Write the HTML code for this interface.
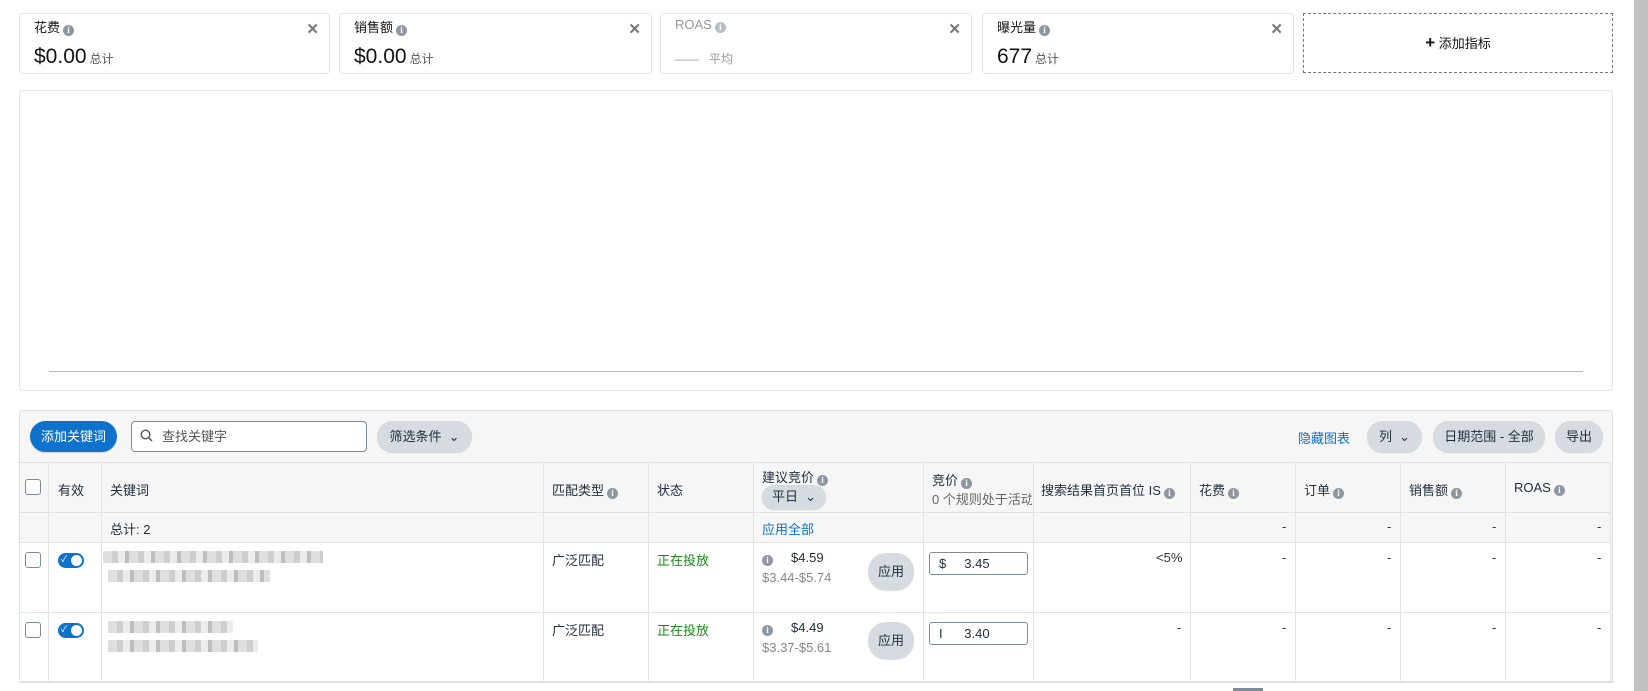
<!DOCTYPE html>
<html><head><meta charset="utf-8"><style>
*{box-sizing:border-box;margin:0;padding:0}
body{width:1648px;height:691px;background:#fff;font-family:"Liberation Sans","Noto Sans CJK SC",sans-serif;color:#232f3e;font-size:13px;position:relative;overflow:hidden}
.a{position:absolute}
.card{position:absolute;top:13px;height:61px;border:1px solid #e3e3e3;border-radius:4px;background:#fff}
.card .t{position:absolute;left:14px;top:3px;font-size:13px;color:#111}
.card .v{position:absolute;left:14px;top:31px;font-size:21px;color:#111}
.card .v small{font-size:12px;color:#555;margin-left:3px}
.card .x{position:absolute;right:10px;top:6px;font-size:15px;color:#777;font-weight:bold}
.i{display:inline-block;width:11px;height:11px;border-radius:50%;background:#8d96a3;color:#fff;font-size:9px;line-height:11px;text-align:center;font-weight:bold;vertical-align:-1px;margin-left:3px;font-family:"Liberation Serif",serif}
.btn{position:absolute;height:31px;border-radius:16px;background:#d5dbe1;color:#232f3e;font-size:13px;line-height:31px;text-align:center;box-shadow:0 1px 1px rgba(0,0,0,.15)}
.hl{position:absolute;height:1px;background:#e3e3e3}
.vl{position:absolute;width:1px;background:#e3e3e3}
.cb{position:absolute;width:16px;height:16px;border:1px solid #7f8b99;border-radius:3px;background:#fff}
.tg{position:absolute;width:26px;height:15px;border-radius:8px;background:#0e72cc}
.tg:after{content:"";position:absolute;right:2px;top:2px;width:11px;height:11px;border-radius:50%;background:#fff}
.tg:before{content:"✓";position:absolute;left:3px;top:-1px;color:#fff;font-size:9px}
.blur{position:absolute;height:12px;background:repeating-linear-gradient(90deg,#d4d4d4 0 9px,#bdbdbd 9px 15px,#e6e6e6 15px 22px,#a9a9a9 22px 26px);opacity:.75}
.dash{position:absolute;color:#333}
</style></head><body>
<div class="card" style="left:19px;width:311px"><div class="t">花费<span class="i">i</span></div><div class="x">✕</div><div class="v">$0.00<small>总计</small></div></div>
<div class="card" style="left:339px;width:313px"><div class="t">销售额<span class="i">i</span></div><div class="x">✕</div><div class="v">$0.00<small>总计</small></div></div>
<div class="card" style="left:660px;width:312px"><div class="t" style="color:#999">ROAS<span class="i" style="background:#b8bec6">i</span></div><div class="x">✕</div><div class="v" style="color:#999;font-size:12px;top:36px">—— &nbsp; 平均</div></div>
<div class="card" style="left:982px;width:312px"><div class="t">曝光量<span class="i">i</span></div><div class="x">✕</div><div class="v">677<small>总计</small></div></div>
<div class="a" style="left:1303px;top:13px;width:310px;height:60px;border:1px dashed #777;text-align:center;line-height:58px;font-size:13px;color:#111"><b style="font-size:17px">+</b> 添加指标</div>

<div class="a" style="left:19px;top:90px;width:1594px;height:301px;border:1px solid #e6e6e6;border-radius:4px"></div>
<div class="hl" style="left:49px;top:371px;width:1534px;background:#bbb"></div>

<div class="a" style="left:19px;top:410px;width:1594px;height:273px;border:1px solid #e0e0e0;border-radius:3px;background:#f6f6f6"></div>
<div class="a" style="left:20px;top:542px;width:1590px;height:139px;background:#fff"></div>
<div class="btn" style="left:30px;top:421px;width:87px;background:#0e72cc;color:#fff">添加关键词</div>
<div class="a" style="left:131px;top:421px;width:236px;height:31px;border:1px solid #7f8b99;border-radius:4px;background:#fff;line-height:29px;padding-left:30px;color:#555">查找关键字</div>
<svg class="a" style="left:140px;top:429px" width="14" height="14"><circle cx="5.5" cy="5.5" r="4.3" fill="none" stroke="#555" stroke-width="1.4"/><path d="M8.5 8.5L12 12" stroke="#555" stroke-width="1.5"/></svg>
<div class="btn" style="left:377px;top:421px;width:95px">筛选条件 &nbsp;⌄</div>
<div class="a" style="left:1298px;top:428px;color:#0e72cc">隐藏图表</div>
<div class="btn" style="left:1367px;top:421px;width:55px">列 &nbsp;⌄</div>
<div class="btn" style="left:1433px;top:421px;width:112px">日期范围 - 全部</div>
<div class="btn" style="left:1555px;top:421px;width:48px">导出</div>

<div class="hl" style="left:20px;top:462px;width:1590px"></div>
<div class="hl" style="left:20px;top:512px;width:1590px"></div>
<div class="hl" style="left:20px;top:542px;width:1590px"></div>
<div class="hl" style="left:20px;top:612px;width:1590px"></div>
<div class="hl" style="left:20px;top:681px;width:1594px;height:2px;background:#e0e0e0"></div>
<div class="vl" style="left:48px;top:462px;height:220px"></div>
<div class="vl" style="left:101px;top:462px;height:220px"></div>
<div class="vl" style="left:543px;top:462px;height:220px"></div>
<div class="vl" style="left:648px;top:462px;height:220px"></div>
<div class="vl" style="left:753px;top:462px;height:220px"></div>
<div class="vl" style="left:923px;top:462px;height:220px"></div>
<div class="vl" style="left:1033px;top:462px;height:220px"></div>
<div class="vl" style="left:1190px;top:462px;height:220px"></div>
<div class="vl" style="left:1295px;top:462px;height:220px"></div>
<div class="vl" style="left:1400px;top:462px;height:220px"></div>
<div class="vl" style="left:1505px;top:462px;height:220px"></div>
<div class="vl" style="left:1610px;top:462px;height:220px"></div>

<div class="cb" style="left:25px;top:479px"></div>
<div class="a" style="left:58px;top:480px">有效</div>
<div class="a" style="left:110px;top:480px">关键词</div>
<div class="a" style="left:552px;top:480px">匹配类型<span class="i">i</span></div>
<div class="a" style="left:657px;top:480px">状态</div>
<div class="a" style="left:762px;top:467px">建议竞价<span class="i">i</span></div>
<div class="btn" style="left:762px;top:485px;width:64px;height:24px;line-height:24px;border-radius:12px">平日 &nbsp;⌄</div>
<div class="a" style="left:932px;top:470px">竞价<span class="i">i</span></div>
<div class="a" style="left:932px;top:489px;color:#666;width:100px;white-space:nowrap;overflow:hidden">0 个规则处于活动状态</div>
<div class="a" style="left:1041px;top:480px">搜索结果首页首位 IS<span class="i">i</span></div>
<div class="a" style="left:1199px;top:480px">花费<span class="i">i</span></div>
<div class="a" style="left:1304px;top:480px">订单<span class="i">i</span></div>
<div class="a" style="left:1409px;top:480px">销售额<span class="i">i</span></div>
<div class="a" style="left:1514px;top:480px">ROAS<span class="i">i</span></div>

<div class="a" style="left:110px;top:519px">总计: 2</div>
<div class="a" style="left:762px;top:519px;color:#0e72cc">应用全部</div>
<div class="dash" style="left:1282px;top:519px">-</div><div class="dash" style="left:1387px;top:519px">-</div><div class="dash" style="left:1492px;top:519px">-</div><div class="dash" style="left:1597px;top:519px">-</div>

<div class="cb" style="left:25px;top:552px"></div>
<div class="tg" style="left:58px;top:553px"></div>
<div class="blur" style="left:103px;top:551px;width:220px"></div>
<div class="blur" style="left:108px;top:570px;width:162px"></div>
<div class="a" style="left:552px;top:550px">广泛匹配</div>
<div class="a" style="left:657px;top:550px;color:#1a8a1a">正在投放</div>
<div class="a" style="left:762px;top:550px"><span class="i" style="margin:0">i</span> &nbsp; &nbsp; $4.59</div>
<div class="a" style="left:762px;top:570px;color:#888">$3.44-$5.74</div>
<div class="btn" style="left:868px;top:553px;width:46px;height:37px;line-height:37px;border-radius:18px">应用</div>
<div class="a" style="left:929px;top:552px;width:99px;height:23px;border:1px solid #7f8b99;border-radius:3px;background:#fff;line-height:21px;padding-left:9px">$ &nbsp; &nbsp; 3.45</div>
<div class="dash" style="left:1156px;top:550px">&lt;5%</div>
<div class="dash" style="left:1282px;top:550px">-</div><div class="dash" style="left:1387px;top:550px">-</div><div class="dash" style="left:1492px;top:550px">-</div><div class="dash" style="left:1597px;top:550px">-</div>

<div class="cb" style="left:25px;top:622px"></div>
<div class="tg" style="left:58px;top:623px"></div>
<div class="blur" style="left:108px;top:621px;width:125px"></div>
<div class="blur" style="left:108px;top:640px;width:150px"></div>
<div class="a" style="left:552px;top:620px">广泛匹配</div>
<div class="a" style="left:657px;top:620px;color:#1a8a1a">正在投放</div>
<div class="a" style="left:762px;top:620px"><span class="i" style="margin:0">i</span> &nbsp; &nbsp; $4.49</div>
<div class="a" style="left:762px;top:640px;color:#888">$3.37-$5.61</div>
<div class="btn" style="left:868px;top:622px;width:46px;height:37px;line-height:37px;border-radius:18px">应用</div>
<div class="a" style="left:929px;top:622px;width:99px;height:23px;border:1px solid #7f8b99;border-radius:3px;background:#fff;line-height:21px;padding-left:9px">I &nbsp; &nbsp; &nbsp;3.40</div>
<div class="dash" style="left:1177px;top:620px">-</div>
<div class="dash" style="left:1282px;top:620px">-</div><div class="dash" style="left:1387px;top:620px">-</div><div class="dash" style="left:1492px;top:620px">-</div><div class="dash" style="left:1597px;top:620px">-</div>

<div class="a" style="left:1634px;top:0;width:14px;height:691px;background:#c1c1c1"></div>
<div class="a" style="left:1233px;top:688px;width:30px;height:3px;background:#7f8b99"></div>
</body></html>
